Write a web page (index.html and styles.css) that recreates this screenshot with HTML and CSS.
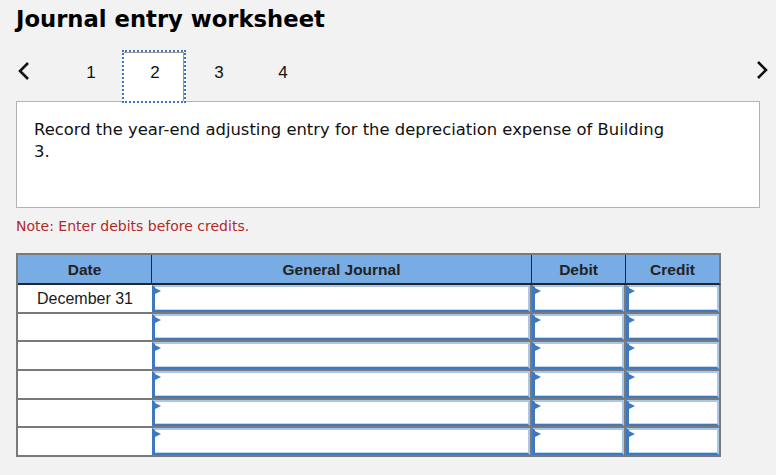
FILE: index.html
```html
<!DOCTYPE html>
<html lang="en">
<head>
<meta charset="utf-8">
<title>Journal entry worksheet</title>
<link rel="stylesheet" href="styles.css">
</head>
<body>
<div class="page">
  <h1 class="title">Journal entry worksheet</h1>
  <div class="nav">
    <div class="arrow prev">
      <svg width="16" height="20" viewBox="0 0 16 20"><polyline points="12,2 4,10 12,18" fill="none" stroke="#111" stroke-width="2.6"/></svg>
    </div>
    <div class="tabs">
      <div class="tab">1</div>
      <div class="tab active">2</div>
      <div class="tab">3</div>
      <div class="tab">4</div>
    </div>
    <div class="spacer"></div>
    <div class="arrow next">
      <svg width="16" height="20" viewBox="0 0 16 20"><polyline points="4,2 12,10 4,18" fill="none" stroke="#111" stroke-width="2.6"/></svg>
    </div>
  </div>
  <div class="prompt"><p class="prompt-text">Record the year-end adjusting entry for the depreciation expense of Building 3.</p></div>
  <p class="note">Note: Enter debits before credits.</p>
  <div class="journal">
    <div class="th">Date</div>
    <div class="th">General Journal</div>
    <div class="th">Debit</div>
    <div class="th last">Credit</div>

    <div class="td date">December 31</div>
    <div class="td in"><div class="inp"></div></div>
    <div class="td in"><div class="inp"></div></div>
    <div class="td in"><div class="inp"></div></div>

    <div class="td date"></div>
    <div class="td in"><div class="inp"></div></div>
    <div class="td in"><div class="inp"></div></div>
    <div class="td in"><div class="inp"></div></div>

    <div class="td date"></div>
    <div class="td in"><div class="inp"></div></div>
    <div class="td in"><div class="inp"></div></div>
    <div class="td in"><div class="inp"></div></div>

    <div class="td date"></div>
    <div class="td in"><div class="inp"></div></div>
    <div class="td in"><div class="inp"></div></div>
    <div class="td in"><div class="inp"></div></div>

    <div class="td date"></div>
    <div class="td in"><div class="inp"></div></div>
    <div class="td in"><div class="inp"></div></div>
    <div class="td in"><div class="inp"></div></div>

    <div class="td date"></div>
    <div class="td in"><div class="inp"></div></div>
    <div class="td in"><div class="inp"></div></div>
    <div class="td in"><div class="inp"></div></div>
  </div>
</div>
</body>
</html>
```

FILE: styles.css
```css
html, body {
  margin: 0;
  padding: 0;
  background: #f2f2f2;
}
body {
  font-family: "DejaVu Sans", Verdana, sans-serif;
  color: #111;
}
.page {
  padding: 0 16px;
}
.title {
  margin: 0;
  padding-top: 6px;
  font-size: 22.7px;
  line-height: 26px;
  font-weight: bold;
  color: #000;
}
.nav {
  display: flex;
  align-items: flex-start;
  margin-top: 18px;
  margin-bottom: -2px;
  height: 53px;
}
.arrow {
  width: 43px;
  height: 20px;
  margin-top: 11px;
  display: flex;
}
.arrow.next {
  width: 16px;
  margin-top: 10px;
  margin-right: -10px;
}
.spacer {
  flex: 1;
}
.tabs {
  display: flex;
  margin-left: -1px;
}
.tab {
  width: 64px;
  height: 53px;
  box-sizing: border-box;
  padding-top: 11px;
  padding-left: 2px;
  text-align: center;
  font-family: "Liberation Sans", Arial, sans-serif;
  font-size: 17px;
  line-height: 20px;
  color: #111;
  border: 2px solid transparent;
}
.tab.active {
  position: relative;
  z-index: 1;
  background: #fff;
  border: 2px dotted #3a74c2;
  box-shadow: inset -1px 1px 0 #9a9a9a;
}
.prompt {
  height: 107px;
  box-sizing: border-box;
  background: #fff;
  border: 1px solid #b3b3b3;
  padding: 17px 17px;
}
.prompt-text {
  margin: 0;
  max-width: 640px;
  font-size: 16.4px;
  line-height: 22px;
  color: #111;
}
.note {
  margin: 9px 0 0;
  font-size: 14px;
  line-height: 18px;
  color: #b02a2a;
}
.journal {
  margin-top: 18px;
  width: 705px;
  box-sizing: border-box;
  display: grid;
  grid-template-columns: 134px 380px 94px 95px;
  grid-template-rows: 30px repeat(6, 28.67px);
  border-top: 2px solid #7a7a7a;
  border-left: 2px solid #7a7a7a;
  font-family: "Liberation Sans", Arial, sans-serif;
}
.th {
  box-sizing: border-box;
  padding-top: 2px;
  background: #78ace4;
  border-bottom: 2px solid #262626;
  border-right: 1px solid #262626;
  display: flex;
  align-items: center;
  justify-content: center;
  font-weight: bold;
  font-size: 15.5px;
  color: #222;
}
.th.last {
  border-right: 2px solid #7a7a7a;
}
.td {
  box-sizing: border-box;
  background: #fff;
  border-bottom: 2px solid #7a7a7a;
}
.date {
  display: flex;
  align-items: center;
  justify-content: center;
  padding-top: 2px;
  font-size: 16px;
  color: #1a1a1a;
}
.in {
  border-right: 2px solid #7a7a7a;
}
.inp {
  position: relative;
  height: 100%;
  box-sizing: border-box;
  border-style: solid;
  border-width: 2px 2px 2px 3px;
  border-color: #a9c7ec #a9c7ec #3d78c0 #3d78c0;
  box-shadow: inset 0 -1px 0 #c2d7f1;
}
.inp::before {
  content: "";
  position: absolute;
  left: -2px;
  top: 0;
  width: 0;
  height: 0;
  border-left: 8px solid #3d78c0;
  border-top: 4px solid transparent;
  border-bottom: 4px solid transparent;
}
```
